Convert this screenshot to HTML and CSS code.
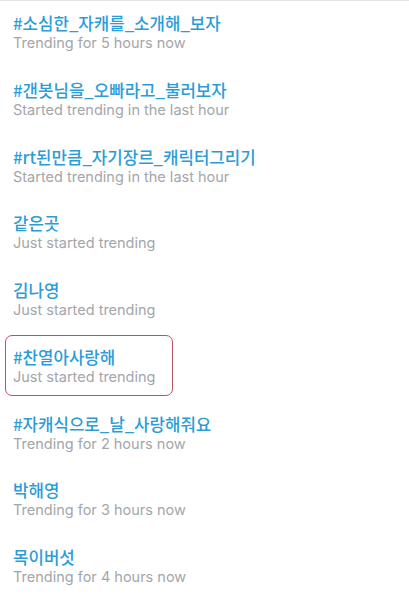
FILE: index.html
```html
<!DOCTYPE html>
<html lang="ko">
<head>
<meta charset="utf-8">
<link rel="stylesheet" href="styles.css">
</head>
<body>
<ul class="trends">
  <li class="trend"><div class="name">#소심한_자캐를_소개해_보자</div><div class="meta">Trending for 5 hours now</div></li>
  <li class="trend"><div class="name">#갠봇님을_오빠라고_불러보자</div><div class="meta">Started trending in the last hour</div></li>
  <li class="trend"><div class="name">#rt된만큼_자기장르_캐릭터그리기</div><div class="meta">Started trending in the last hour</div></li>
  <li class="trend"><div class="name">같은곳</div><div class="meta">Just started trending</div></li>
  <li class="trend"><div class="name">김나영</div><div class="meta">Just started trending</div></li>
  <li class="trend highlighted"><span class="mark"></span><div class="name">#찬열아사랑해</div><div class="meta">Just started trending</div></li>
  <li class="trend"><div class="name">#자캐식으로_날_사랑해줘요</div><div class="meta">Trending for 2 hours now</div></li>
  <li class="trend"><div class="name">박해영</div><div class="meta">Trending for 3 hours now</div></li>
  <li class="trend"><div class="name">목이버섯</div><div class="meta">Trending for 4 hours now</div></li>
</ul>
</body>
</html>
```
FILE: styles.css
```css
html, body {
  margin: 0;
  padding: 0;
  background: #ffffff;
}
body {
  width: 409px;
  height: 600px;
  overflow: hidden;
}
.trends {
  list-style: none;
  margin: 0;
  padding: 0;
  border-top: 1px solid #e3e3e3;
}
.trend {
  position: relative;
  box-sizing: border-box;
  height: 66.75px;
  padding: 11px 13px 0;
}
.name {
  font-family: "Noto Sans CJK KR", "Noto Sans", sans-serif;
  font-weight: 500;
  font-size: 16.8px;
  line-height: 22px;
  color: #2b9cd8;
  white-space: nowrap;
}
.meta {
  font-family: Inter, Roboto, "Liberation Sans", sans-serif;
  font-size: 14.5px;
  line-height: 18px;
  margin-top: 0;
  color: #a3a6aa;
  white-space: nowrap;
}
.mark {
  position: absolute;
  left: 5px;
  top: 0;
  width: 168px;
  height: 61px;
  box-sizing: border-box;
  border: 1.5px solid #b8545c;
  border-radius: 7px;
}
```
